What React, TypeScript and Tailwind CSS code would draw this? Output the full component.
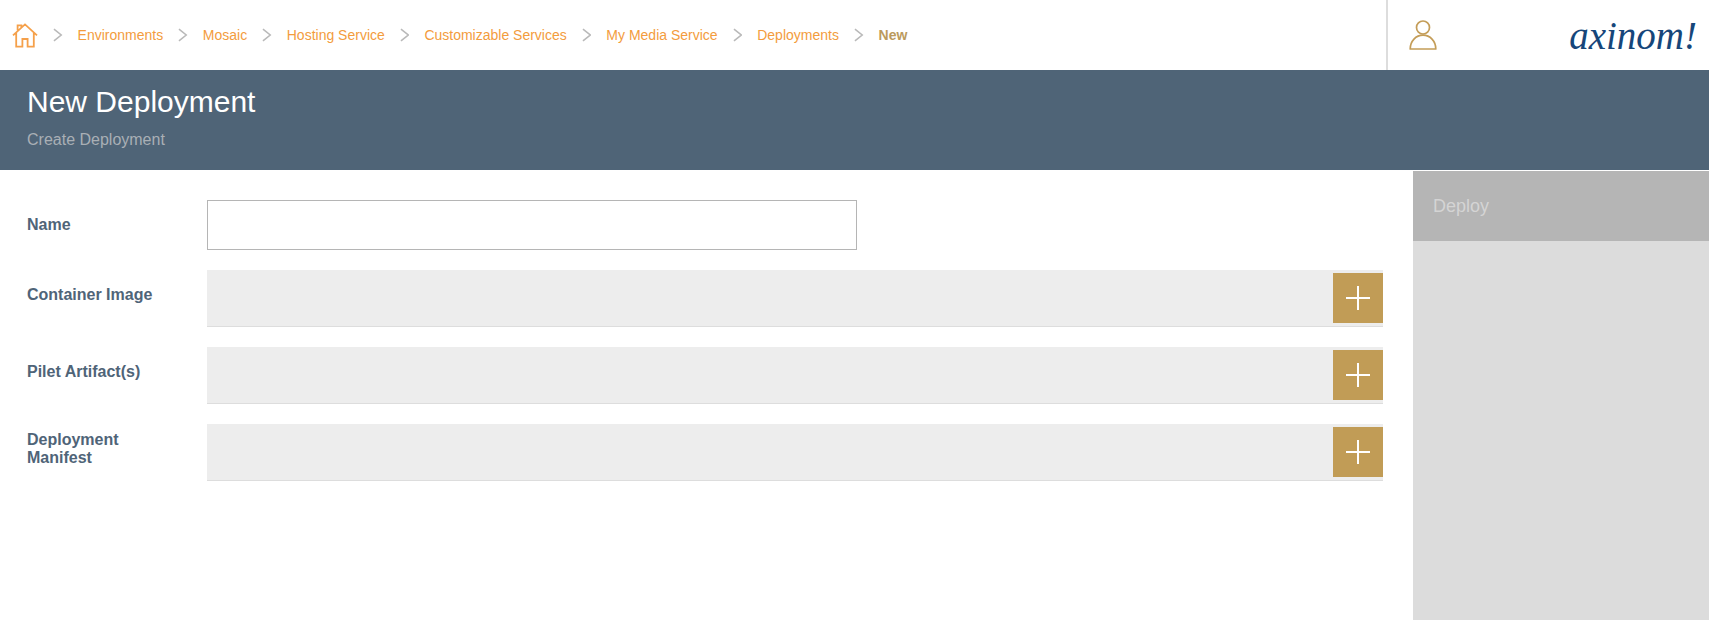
const crumbs = ["Environments", "Mosaic", "Hosting Service", "Customizable Services", "My Media Service", "Deployments"];

function Chevron() {
  return (
    <svg width="9.6" height="14" viewBox="0 0 10 14" fill="none" className="shrink-0">
      <path d="M1 0.8l7.6 6.2-7.6 6.2" stroke="#b9b9b9" strokeWidth="1.6" />
    </svg>
  );
}

function Row({ label }: { label: string }) {
  return (
    <div className="flex h-[57px] items-start">
      <div className="flex h-[50px] w-[180px] shrink-0 items-center pr-12 text-base leading-[18px] font-bold text-[#4f6478]">{label}</div>
      <div className="flex h-[57px] flex-1 items-start justify-end border-b border-[#dddddd] bg-[#ededed] pt-[3px]">
        <div className="flex h-[50px] w-[50px] items-center justify-center bg-[#c19c56]">
          <svg width="24" height="24" viewBox="0 0 24 24">
            <path d="M0 12h24M12 0v24" stroke="#ffffff" strokeWidth="2" />
          </svg>
        </div>
      </div>
    </div>
  );
}

export default function App() {
  return (
    <div className="flex h-[620px] w-full flex-col overflow-hidden bg-white font-['Liberation_Sans',Arial,sans-serif]">
      <header className="flex h-[70px] shrink-0 items-center">
        <div className="flex flex-1 items-center pl-3">
          <svg width="26" height="26" viewBox="0 0 26 26" fill="none" stroke="#f5a04a" strokeWidth="1.8" className="mr-[15px] shrink-0">
            <path d="M1 13.4L13 2.4l12 11M4.2 11v13.6h6.2v-7.6h5.2v7.6h6.2V11M5.6 8.2V3.4h3.8v1.8" />
          </svg>
          {crumbs.map((c) => (
            <div key={c} className="flex items-center">
              <Chevron />
              <span className="mx-[15px] text-sm whitespace-nowrap text-[#f39c3d]">{c}</span>
            </div>
          ))}
          <Chevron />
          <span className="ml-[15px] text-sm font-bold text-[#bb9a5c]">New</span>
        </div>
        <div className="flex h-full w-[323px] shrink-0 items-center border-l-2 border-[#dddddd]">
          <svg width="28" height="30" viewBox="0 0 28 30" fill="none" stroke="#c49d58" strokeWidth="1.7" className="ml-[21px] shrink-0">
            <circle cx="14" cy="7.5" r="6.5" />
            <path d="M1.2 29C1.2 21 7 15.2 14 15.2S26.8 21 26.8 29z" strokeLinejoin="round" />
          </svg>
          <span className="ml-auto pr-[12px] font-['Liberation_Serif',serif] text-[39px] leading-none text-[#16467a] italic">axinom!</span>
        </div>
      </header>
      <section className="h-[100px] shrink-0 bg-[#4f6477] pt-[15px] pl-[27px]">
        <h1 className="text-[30px] leading-[34px] text-white">New Deployment</h1>
        <p className="mt-[12px] text-base leading-[18px] text-[#a9afb5]">Create Deployment</p>
      </section>
      <div className="flex min-h-0 flex-1">
        <main className="flex-1 pt-[30px] pr-[30px] pl-[27px]">
          <div className="flex h-[50px] items-center">
            <div className="w-[180px] shrink-0 text-base font-bold text-[#4f6478]">Name</div>
            <input className="h-[50px] w-[650px] border border-[#b5b5b5] bg-white" />
          </div>
          <div className="mt-5 flex flex-col gap-5">
            <Row label="Container Image" />
            <Row label="Pilet Artifact(s)" />
            <Row label="Deployment Manifest" />
          </div>
        </main>
        <aside className="w-[296px] shrink-0 border-t border-white bg-[#dcdcdc]">
          <div className="flex h-[70px] items-center bg-[#b5b5b5] pl-5 text-lg text-[#d4d4d4]">Deploy</div>
        </aside>
      </div>
    </div>
  );
}
